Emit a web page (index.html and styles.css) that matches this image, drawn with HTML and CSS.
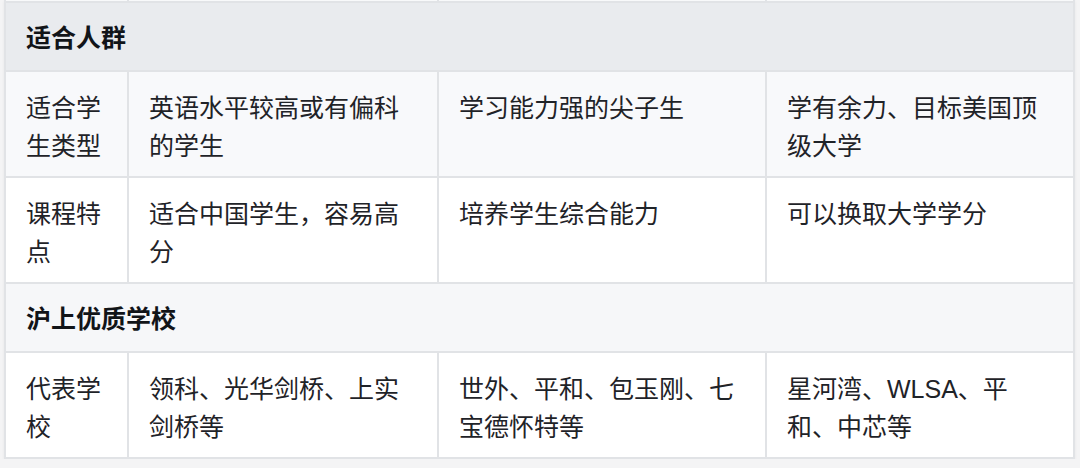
FILE: index.html
```html
<!DOCTYPE html>
<html lang="zh-CN">
<head>
<meta charset="utf-8">
<link rel="stylesheet" href="styles.css">
</head>
<body>
<div class="wrap">
<table class="grid">
  <colgroup>
    <col class="c1"><col class="c2"><col class="c3"><col class="c4">
  </colgroup>
  <tbody>
    <tr class="cut"><td></td><td></td><td></td><td></td></tr>
    <tr class="head dark"><td colspan="4">适合人群</td></tr>
    <tr class="alt"><td>适合学生类型</td><td>英语水平较高或有偏科的学生</td><td>学习能力强的尖子生</td><td>学有余力、目标美国顶级大学</td></tr>
    <tr><td>课程特点</td><td>适合中国学生，容易高分</td><td>培养学生综合能力</td><td>可以换取大学学分</td></tr>
    <tr class="head light"><td colspan="4">沪上优质学校</td></tr>
    <tr><td>代表学校</td><td>领科、光华剑桥、上实剑桥等</td><td>世外、平和、包玉刚、七宝德怀特等</td><td>星河湾、WLSA、平和、中芯等</td></tr>
  </tbody>
</table>
</div>
</body>
</html>
```
FILE: styles.css
```css
html, body {
  margin: 0;
  padding: 0;
  background: #f4f4f5;
}
.wrap {
  padding: 0 5px 0 4px;
}
.grid {
  width: 1071px;
  border-collapse: collapse;
  table-layout: fixed;
  background: #ffffff;
  font-family: "Liberation Sans", "Noto Sans CJK SC", sans-serif;
  font-size: 25px;
  line-height: 38px;
  color: #1f2328;
  box-shadow: 0 1px 3px rgba(0,0,0,0.06);
}
.c1 { width: 123px; }
.c2 { width: 310px; }
.c3 { width: 328px; }
.c4 { width: 308px; }
.grid td {
  border: 2px solid #e1e3e6;
  padding: 17px 20px 11px 20px;
  vertical-align: top;
  word-break: break-all;
}
.grid tr.cut td {
  padding: 0;
  height: 1px;
  line-height: 0;
  font-size: 0;
  border-top: 0;
  background: #f8f9fa;
}
.grid tr.head td {
  font-weight: 700;
  color: #111418;
  padding: 16px 20px 13px 20px;
}
.grid tr.dark td { background: #e9ebee; }
.grid tr.light td { background: #f6f7f9; }
.grid tr.alt td { background: #f8f9fb; }
```
